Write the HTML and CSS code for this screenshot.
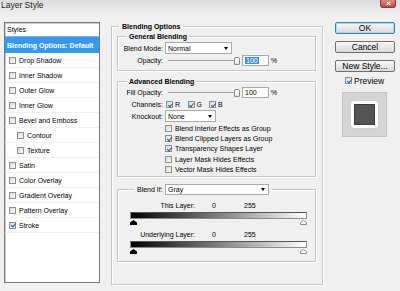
FILE: index.html
```html
<!DOCTYPE html>
<html lang="en">
<head>
    <meta charset="UTF-8">
    <meta name="viewport" content="width=device-width, initial-scale=1.0">
    <title>Layer Style</title>
    <link rel="stylesheet" href="styles.css">
</head>
<body>
    <div class="titlebar">
        <span class="title">Layer Style</span>
        <span class="close"></span>
    </div>

    <div class="dialog">
        <div class="style-list">
            <div class="list-head">Styles</div>
            <div class="item selected">Blending Options: Default</div>
            <div class="item"><span class="cb"></span>Drop Shadow</div>
            <div class="item"><span class="cb"></span>Inner Shadow</div>
            <div class="item"><span class="cb"></span>Outer Glow</div>
            <div class="item"><span class="cb"></span>Inner Glow</div>
            <div class="item"><span class="cb"></span>Bevel and Emboss</div>
            <div class="item sub"><span class="cb"></span>Contour</div>
            <div class="item sub"><span class="cb"></span>Texture</div>
            <div class="item"><span class="cb"></span>Satin</div>
            <div class="item"><span class="cb"></span>Color Overlay</div>
            <div class="item"><span class="cb"></span>Gradient Overlay</div>
            <div class="item"><span class="cb"></span>Pattern Overlay</div>
            <div class="item"><span class="cb on"></span>Stroke</div>
        </div>

        <div class="group outer">
            <div class="legend">Blending Options</div>

            <div class="group general">
                <div class="legend">General Blending</div>
                <div class="row first">
                    <span class="lbl">Blend Mode:</span>
                    <div class="select mode">Normal<span class="arrow"></span></div>
                </div>
                <div class="row short">
                    <span class="lbl">Opacity:</span>
                    <div class="slider"><span class="thumb"></span></div>
                    <div class="num"><span class="sel">100</span></div>
                    <span class="pct">%</span>
                </div>
            </div>

            <div class="group advanced">
                <div class="legend">Advanced Blending</div>
                <div class="row short first">
                    <span class="lbl">Fill Opacity:</span>
                    <div class="slider"><span class="thumb"></span></div>
                    <div class="num">100</div>
                    <span class="pct">%</span>
                </div>
                <div class="row short">
                    <span class="lbl">Channels:</span>
                    <div class="channels">
                        <span class="chan"><span class="cb on"></span>R</span>
                        <span class="chan"><span class="cb on"></span>G</span>
                        <span class="chan"><span class="cb on"></span>B</span>
                    </div>
                </div>
                <div class="row">
                    <span class="lbl">Knockout:</span>
                    <div class="select knock">None<span class="arrow"></span></div>
                </div>
                <div class="checks">
                    <div class="check"><span class="cb"></span>Blend Interior Effects as Group</div>
                    <div class="check"><span class="cb on"></span>Blend Clipped Layers as Group</div>
                    <div class="check"><span class="cb on"></span>Transparency Shapes Layer</div>
                    <div class="check"><span class="cb"></span>Layer Mask Hides Effects</div>
                    <div class="check"><span class="cb"></span>Vector Mask Hides Effects</div>
                </div>
            </div>

            <div class="group blendif">
                <div class="legend plain">
                    <span class="if-lbl">Blend If:</span>
                    <div class="select gray">Gray<span class="arrow"></span></div>
                </div>

                <div class="range-row">
                    <span class="range-lbl">This Layer:</span>
                    <span class="v0">0</span>
                    <span class="v255">255</span>
                </div>
                <div class="bar"></div>
                <div class="handles">
                    <svg width="7" height="5" viewBox="0 0 7 5"><polygon points="3.5,0 7,2.5 7,5 0,5 0,2.5" fill="#000"/></svg>
                    <svg width="7" height="5" viewBox="0 0 7 5"><polygon points="3.5,0.5 6.5,2.7 6.5,4.5 0.5,4.5 0.5,2.7" fill="#fff" stroke="#8a8a8a"/></svg>
                </div>

                <div class="range-row under">
                    <span class="range-lbl">Underlying Layer:</span>
                    <span class="v0">0</span>
                    <span class="v255">255</span>
                </div>
                <div class="bar"></div>
                <div class="handles">
                    <svg width="7" height="5" viewBox="0 0 7 5"><polygon points="3.5,0 7,2.5 7,5 0,5 0,2.5" fill="#000"/></svg>
                    <svg width="7" height="5" viewBox="0 0 7 5"><polygon points="3.5,0.5 6.5,2.7 6.5,4.5 0.5,4.5 0.5,2.7" fill="#fff" stroke="#8a8a8a"/></svg>
                </div>
            </div>
        </div>

        <div class="side">
            <div class="btn ok">OK</div>
            <div class="btn">Cancel</div>
            <div class="btn">New Style...</div>
            <div class="preview"><span class="cb on"></span>Preview</div>
            <div class="swatch">
                <div class="swatch-inner"><div class="swatch-dark"></div></div>
            </div>
        </div>
    </div>
</body>
</html>
```

FILE: styles.css
```css
* {
    box-sizing: border-box;
}

body {
    margin: 0;
    width: 400px;
    height: 291px;
    overflow: hidden;
    background: #f0f0f0;
    font-family: 'Liberation Sans', Arial, sans-serif;
    font-size: 7px;
    color: #000;
}

/* title bar */
.titlebar {
    height: 18px;
    display: flex;
    align-items: flex-start;
    background: linear-gradient(#dcdcdc, #ececec 60%, #f1f1f1);
}

.title {
    font-size: 8.5px;
    line-height: 10px;
    margin-left: 1px;
    color: #222;
}

.close {
    position: relative;
    margin-left: auto;
    margin-right: 4px;
    width: 16px;
    height: 8px;
    background: linear-gradient(#dc8d82, #c2483b);
    border: 1px solid #8c3a30;
    border-top: none;
    border-radius: 0 0 3px 3px;
}

.close::before,
.close::after {
    content: '';
    position: absolute;
    left: 5px;
    top: 2.5px;
    width: 5px;
    height: 1.3px;
    background: #fff;
    transform: rotate(40deg);
}

.close::after {
    transform: rotate(-40deg);
}

.dialog {
    display: flex;
    align-items: flex-start;
}

/* styles list */
.style-list {
    margin: 4px 0 0 4px;
    width: 96px;
    height: 261px;
    background: #fff;
    border: 1px solid #777;
    box-shadow: inset 1px 1px 0 #cfcfcf;
}

.list-head {
    height: 14px;
    line-height: 13px;
    padding-left: 2px;
    border-bottom: 1px solid #a8a8a8;
}

.item {
    height: 15px;
    display: flex;
    align-items: center;
    gap: 3px;
    padding-left: 4px;
    border-bottom: 1px solid #f1f1f1;
}

.item.selected {
    height: 16px;
    padding-left: 2px;
    background: #3399ff;
    color: #fff;
    font-weight: bold;
    border-bottom: none;
}

.item.sub {
    padding-left: 12px;
}

/* checkbox */
.cb {
    position: relative;
    flex: none;
    width: 7px;
    height: 7px;
    border: 1px solid #8f8f8f;
    background: linear-gradient(135deg, #d8d8d8, #fbfbfb);
}

.cb.on::after {
    content: '';
    position: absolute;
    left: 1.6px;
    top: -0.5px;
    width: 2px;
    height: 4px;
    border: solid #2553b8;
    border-width: 0 1.2px 1.2px 0;
    transform: rotate(40deg);
}

/* group boxes */
.group {
    border: 1px solid #c6c6c6;
    box-shadow: inset 1px 1px 0 #fff, 1px 1px 0 #fff;
}

.legend {
    width: fit-content;
    height: 9px;
    line-height: 9px;
    margin-top: -5px;
    padding: 0 3px;
    background: #f0f0f0;
    font-weight: bold;
}

.outer {
    margin: 8px 0 0 11px;
    width: 212px;
    height: 259px;
    padding: 0 6px 0 5px;
}

.outer > .legend {
    margin-left: 2px;
}

.general {
    margin-top: 5px;
    padding-bottom: 4px;
}

.general > .legend,
.advanced > .legend {
    margin-left: 9px;
    padding: 0 2px;
}

.advanced {
    margin-top: 10px;
    padding-bottom: 1px;
}

.row {
    display: flex;
    align-items: center;
    height: 12px;
}

.row.short {
    height: 11px;
    margin-top: 1px;
}

.row.first {
    margin-top: 1px;
}

.lbl {
    flex: none;
    width: 45px;
    margin-right: 2px;
    text-align: right;
}

.select {
    height: 12px;
    display: flex;
    align-items: center;
    justify-content: space-between;
    padding-left: 2px;
    background: #fff;
    border: 1px solid #a9a9a9;
}

.select.mode {
    width: 67px;
}

.select.knock {
    width: 51px;
}

.select.gray {
    width: 104px;
    height: 11px;
}

.arrow {
    width: 0;
    height: 0;
    margin-right: 3px;
    border-left: 2.5px solid transparent;
    border-right: 2.5px solid transparent;
    border-top: 3px solid #000;
}

.slider {
    display: flex;
    align-items: center;
    width: 75px;
    height: 9px;
    padding-left: 3px;
    background: linear-gradient(#a0a0a0, #a0a0a0) no-repeat 3px 50% / 70px 1px;
}

.thumb {
    margin-left: auto;
    width: 6px;
    height: 8px;
    background: linear-gradient(#fff, #e2e2e2);
    border: 1px solid #8a8a8a;
    border-radius: 2px 2px 1px 1px;
}

.num {
    margin-left: 2px;
    width: 27px;
    height: 11px;
    line-height: 9px;
    padding-left: 2px;
    background: #fff;
    border: 1px solid #a9a9a9;
}

.sel {
    background: #3a8ee6;
    color: #fff;
    padding: 0 1px;
}

.pct {
    margin-left: 2px;
}

.channels {
    display: flex;
    margin-left: 1px;
}

.chan {
    display: flex;
    align-items: center;
    gap: 2px;
    width: 21.5px;
}

.checks {
    margin-top: 1px;
    padding-left: 47px;
}

.check {
    display: flex;
    align-items: center;
    gap: 3px;
    height: 10.4px;
}

/* blend if */
.blendif {
    margin-top: 12px;
    padding-bottom: 7px;
}

.legend.plain {
    display: flex;
    align-items: center;
    height: 11px;
    margin: -6px 0 0 16px;
    font-weight: normal;
}

.if-lbl {
    width: 26px;
    margin-right: 2px;
}

.range-row {
    display: flex;
    height: 10px;
    line-height: 10px;
    margin-top: 6px;
}

.range-row.under {
    margin-top: 5px;
}

.range-lbl {
    width: 77px;
    text-align: right;
}

.v0 {
    width: 32px;
    padding-left: 17px;
}

.v255 {
    padding-left: 17px;
}

.bar {
    margin: 1px 0 0 12px;
    width: 177px;
    height: 7px;
    border: 1px solid #8c8c8c;
    border-top-color: #555;
    background: linear-gradient(to right, #000, #fff);
}

.handles {
    display: flex;
    justify-content: space-between;
    margin: 1px 0 0 12px;
    width: 177px;
    height: 5px;
}

.handles svg {
    display: block;
}

/* buttons column */
.side {
    margin: 4px 0 0 12px;
    width: 60px;
    font-size: 8.5px;
}

.btn {
    height: 12px;
    margin-bottom: 7px;
    line-height: 10px;
    text-align: center;
    background: linear-gradient(#f7f7f7, #e9e9e9 50%, #d9d9d9);
    border: 1px solid #707070;
    border-radius: 2px;
}

.btn.ok {
    border-color: #3c7fb1;
    box-shadow: inset 0 0 0 1px #a6d9f7;
}

.preview {
    display: flex;
    align-items: center;
    gap: 2px;
    height: 11px;
    margin-top: -4px;
    padding-left: 10px;
}

.swatch {
    display: flex;
    align-items: center;
    justify-content: center;
    margin: 6px 0 0 7px;
    width: 45px;
    height: 45px;
    background: #d5d5d5;
    border: 1px solid #c2c2c2;
}

.swatch-inner {
    display: flex;
    align-items: center;
    justify-content: center;
    width: 27px;
    height: 27px;
    background: #fff;
    border-radius: 3px;
    box-shadow: 0 0 1px #aaa;
}

.swatch-dark {
    width: 21px;
    height: 21px;
    background: #545454;
    border: 1px solid #3a3a3a;
}
```
